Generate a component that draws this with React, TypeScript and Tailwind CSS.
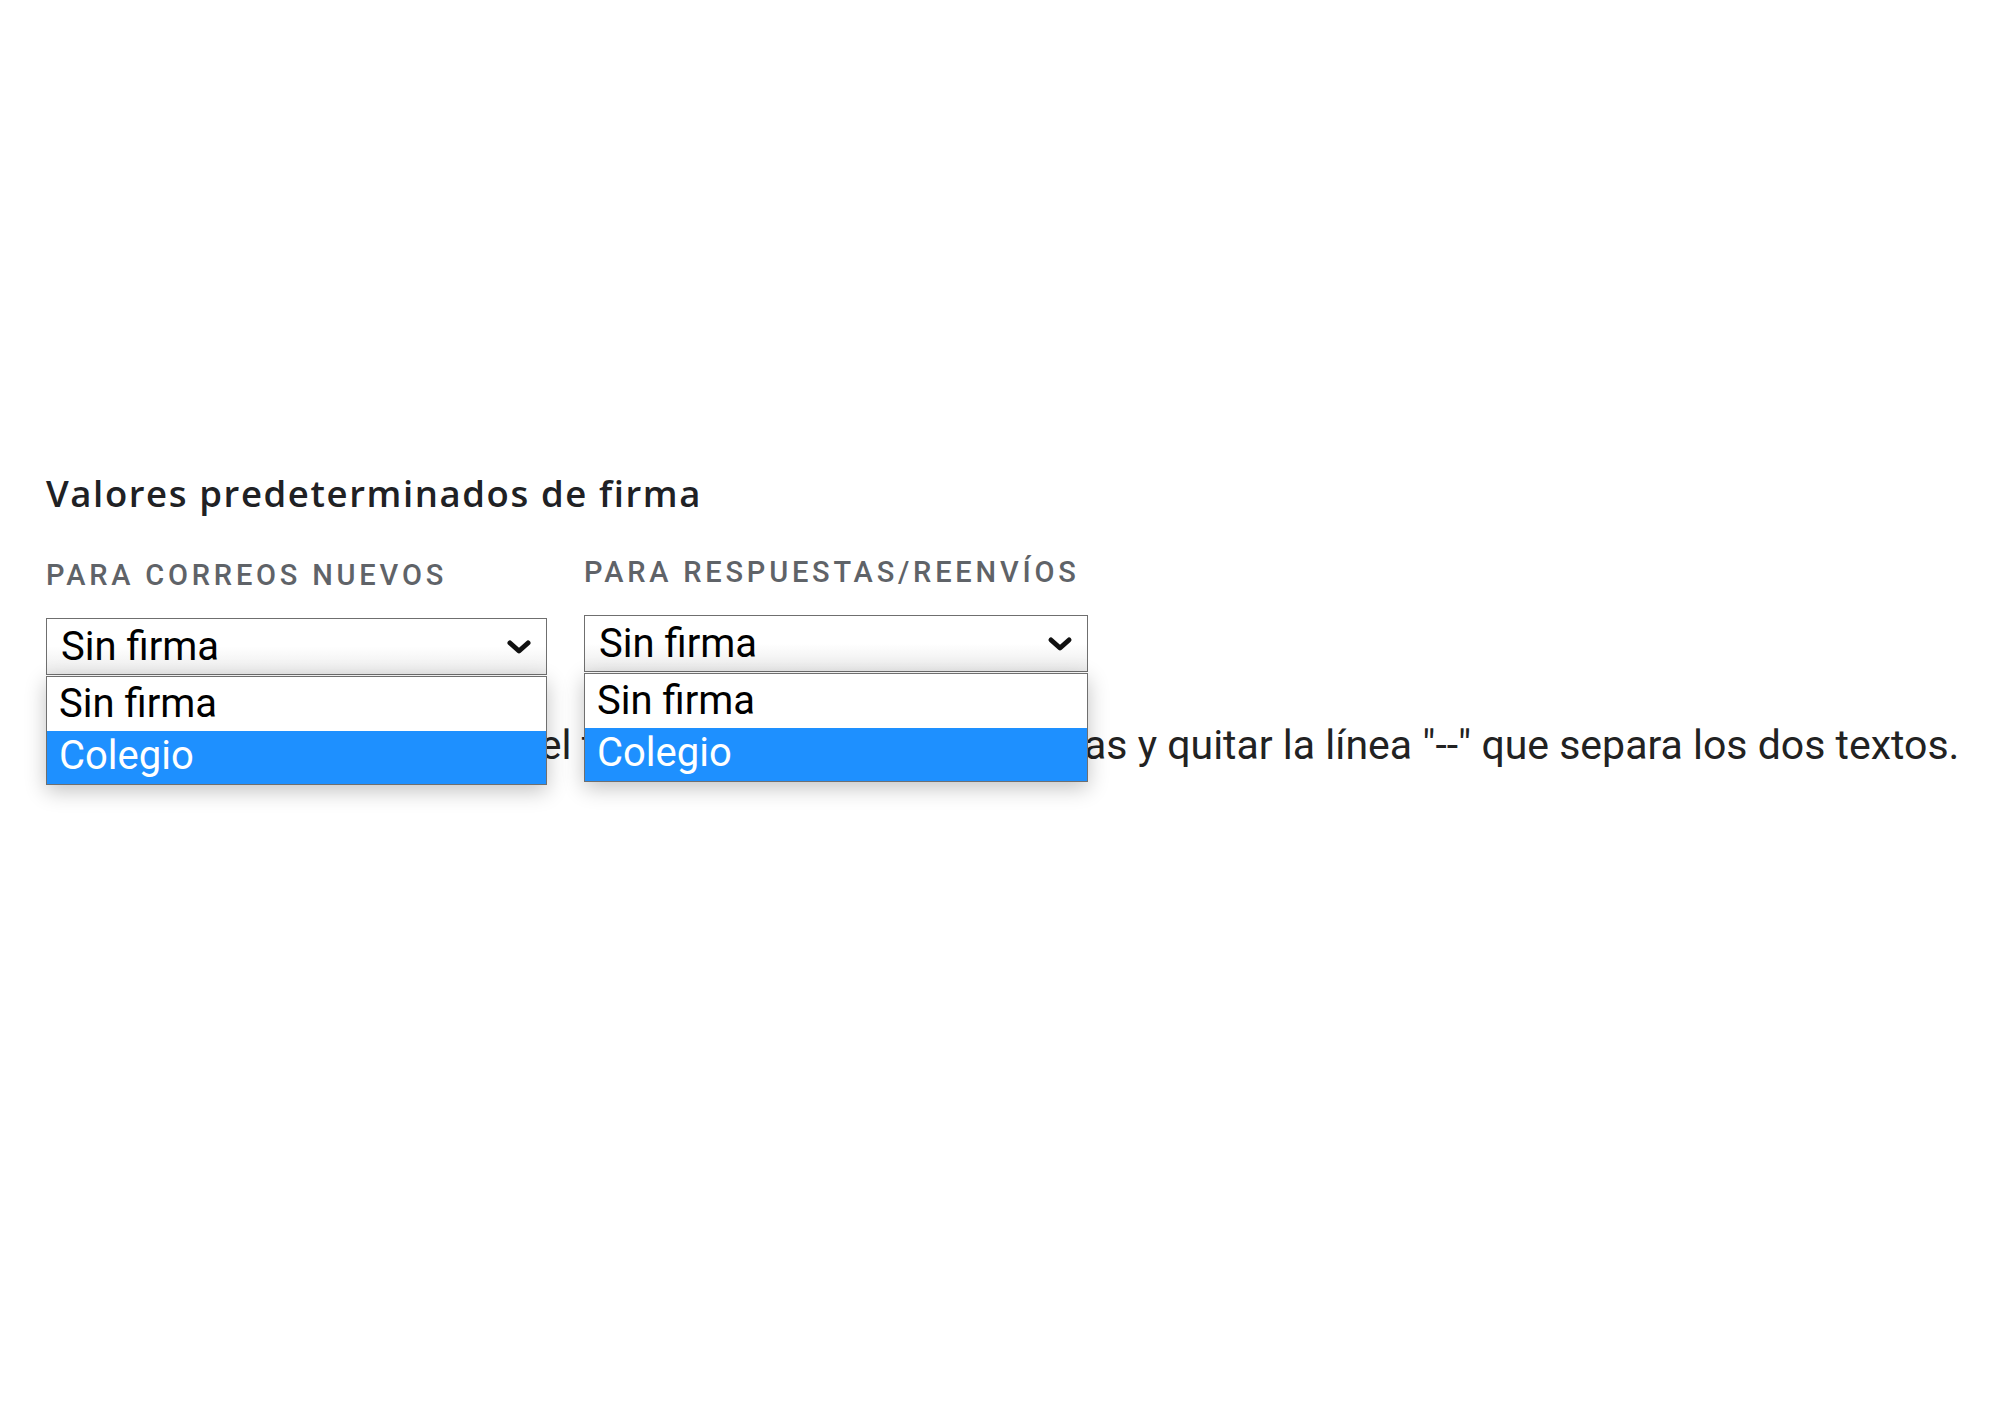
import React from "react";

const Chevron = () => (
  <svg width="26" height="18" viewBox="0 0 26 18" className="shrink-0">
    <polyline points="4,5 13,13 22,5" fill="none" stroke="#111" strokeWidth="5" strokeLinecap="round" strokeLinejoin="round" />
  </svg>
);

function OpenSelect({ width }: { width: string }) {
  return (
    <div className={`relative ${width}`}>
      <div className="flex h-[57px] items-center justify-between border border-[#6f6f6f] bg-gradient-to-b from-white from-50% to-[#ebebeb] pl-[14px] pr-[14px] text-[40px] leading-[46px] text-black">
        <span>Sin firma</span>
        <Chevron />
      </div>
      <div className="absolute left-0 right-0 top-full z-10 mt-[1px] border border-[#6f6f6f] bg-white text-[40px] leading-[46px] shadow-[0_6px_20px_rgba(0,0,0,0.24)]">
        <div className="h-[54px] pl-[12px] pt-[4px] text-black">Sin firma</div>
        <div className="h-[53px] bg-[#1e90ff] pl-[12px] pt-[2px] text-white">Colegio</div>
      </div>
    </div>
  );
}

export default function App() {
  return (
    <div className="min-h-[1425px] w-[2000px] bg-white pl-[46px] pt-[469px] font-['Roboto',sans-serif]">
      <h2 className="font-['Open_Sans',sans-serif] text-[36.5px] font-semibold leading-[49px] tracking-[1.6px] text-[#202124]">
        Valores predeterminados de firma
      </h2>
      <div className="mt-[37px] flex items-start gap-[37px]">
        <div className="flex w-[501px] flex-col pt-[3px]">
          <div className="text-[29px] font-medium uppercase leading-[34px] tracking-[3.8px] text-[#5f6368]">
            Para correos nuevos
          </div>
          <div className="mt-[26px]">
            <OpenSelect width="w-[501px]" />
          </div>
        </div>
        <div className="flex w-[504px] flex-col">
          <div className="text-[29px] font-medium uppercase leading-[34px] tracking-[3.8px] text-[#5f6368]">
            Para respuestas/reenvíos
          </div>
          <div className="mt-[26px]">
            <OpenSelect width="w-[504px]" />
          </div>
        </div>
      </div>
      <p className="mt-[46px] pl-[14px] text-[41px] leading-[48px] text-[#222222]">
        Insertar esta firma antes del texto citado en las respuestas y quitar la línea "--" que separa los dos textos.
      </p>
    </div>
  );
}
